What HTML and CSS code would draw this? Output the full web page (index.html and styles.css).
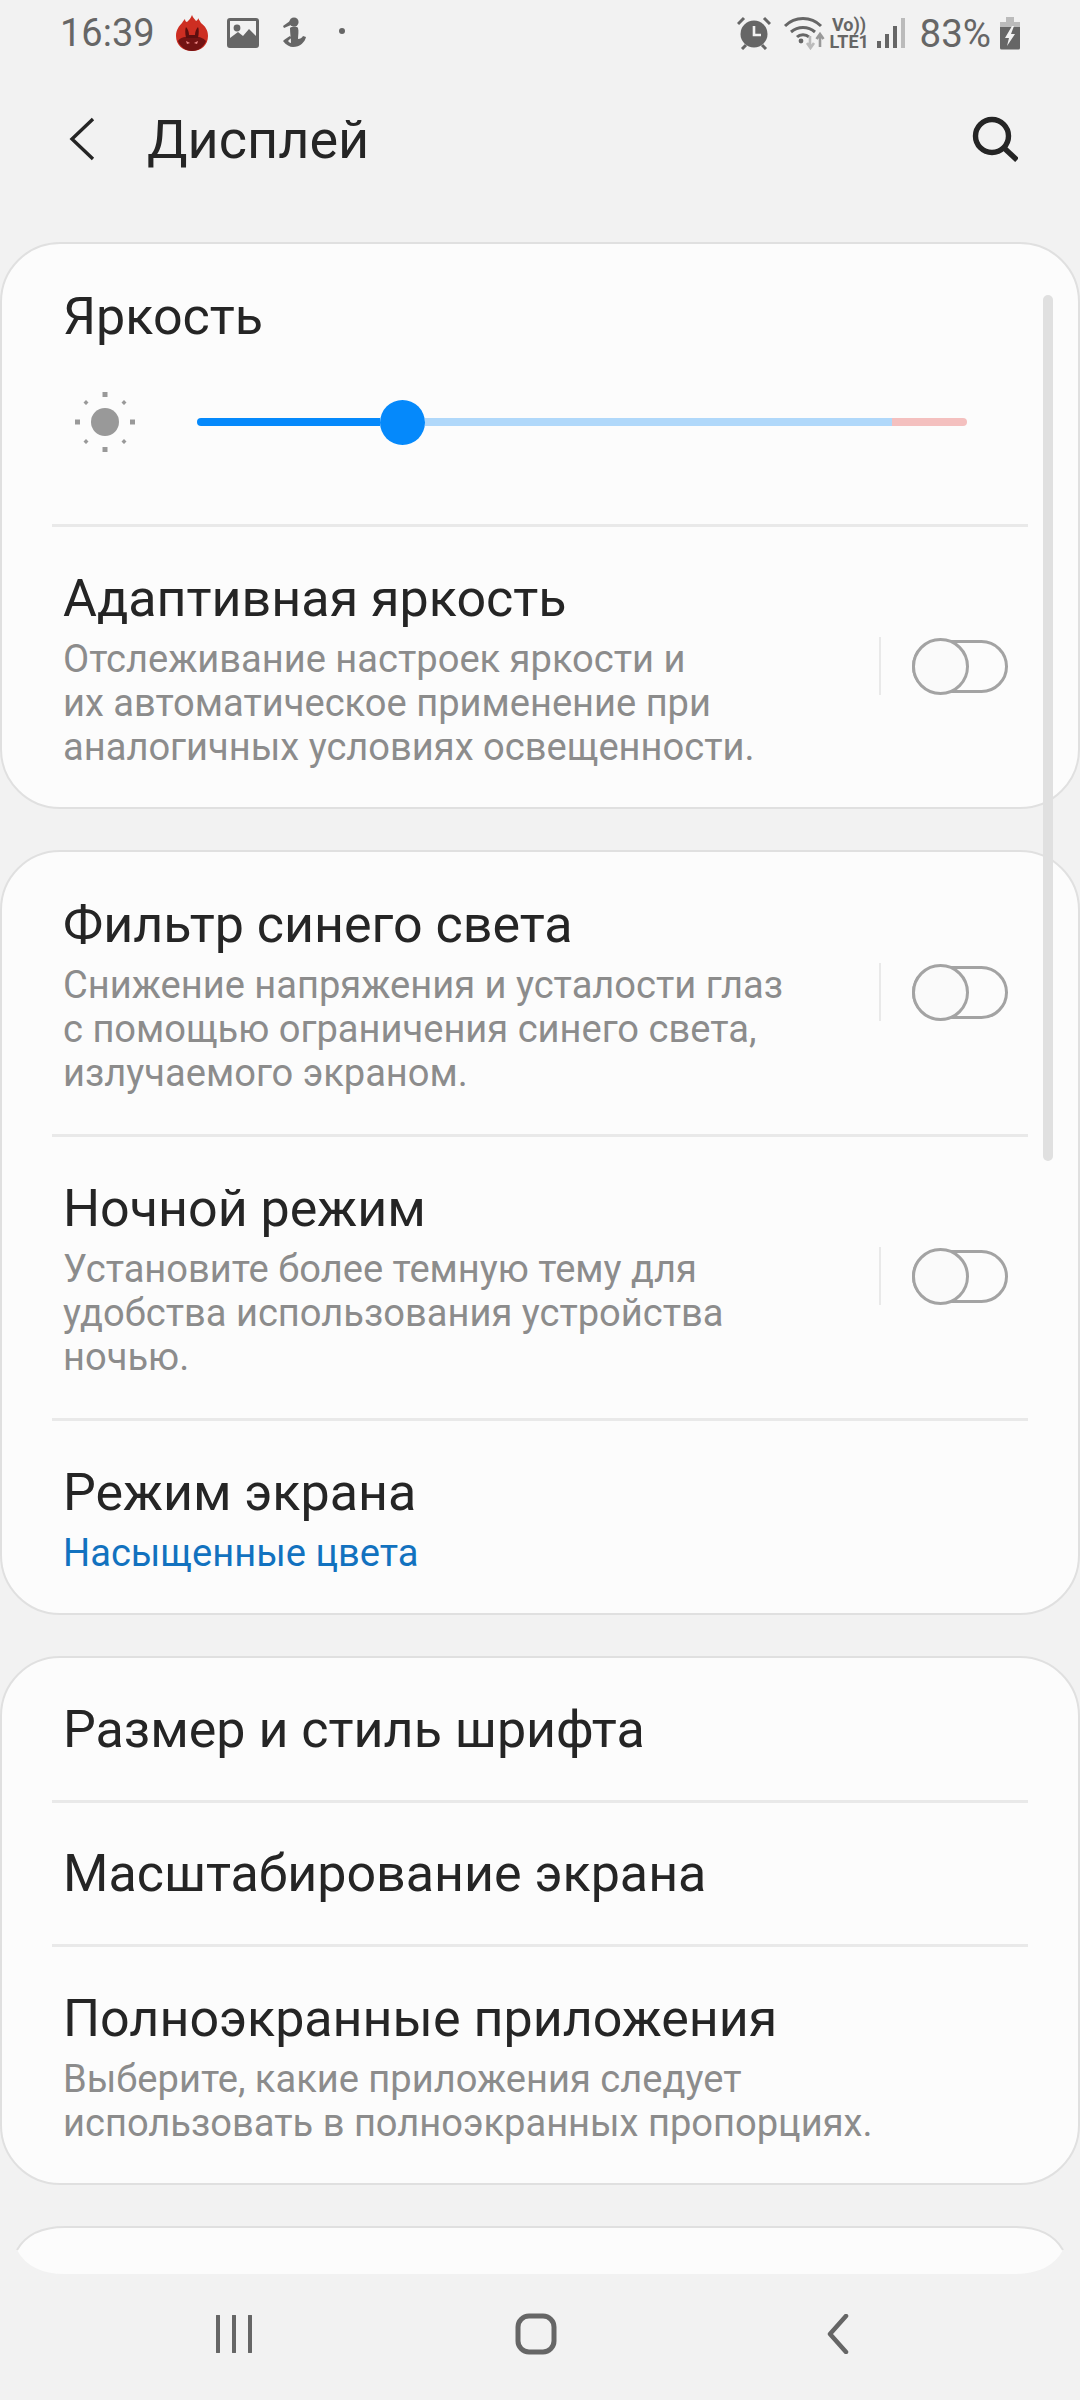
FILE: index.html
```html
<!DOCTYPE html>
<html lang="ru">
<head>
    <meta charset="UTF-8">
    <meta name="viewport" content="width=device-width, initial-scale=1.0">
    <title>Дисплей</title>
    <link rel="stylesheet" href="styles.css">
</head>
<body>
<div class="screen">

    <!-- Строка состояния -->
    <div class="status-bar">
        <div class="status-left">
            <span class="clock">16:39</span>
            <svg class="ic-antutu" viewBox="0 0 34 38"><path d="M17 1c1 3 3 4 4 6 2-1 2-2 2-3 1 2 2 3 3 5 4 3 7 7 7 13 0 9-7 15-16 15S1 31 1 22c0-6 3-10 6-13 1-2 2-3 3-4 0 2 1 3 2 3 2-2 4-4 5-7z" fill="#cd2e22"/><path d="M3 27c2 6 8 10 14 10s12-4 14-10c-3-3-6-4-7-4h-14c-2 0-5 1-7 4z" fill="#731313"/><path d="M11 24c-1-5-1-9 0-11 2 2 3 5 3 8h6c0-3 1-6 3-8 1 2 1 6 0 11z" fill="#5c0f0f"/><path d="M11 27l4 2-3 1zM23 27l-4 2 3 1z" fill="#e88"/></svg>
            <svg class="ic-pic" viewBox="0 0 32 30"><path d="M3 0h26a3 3 0 0 1 3 3v24a3 3 0 0 1-3 3H3a3 3 0 0 1-3-3V3a3 3 0 0 1 3-3zm0 3v17l8-6 5 4 6-7 7 7V3z" fill="#666" fill-rule="evenodd"/><circle cx="10" cy="10" r="3.4" fill="#666"/></svg>
            <svg class="ic-fig" viewBox="0 0 28 32"><circle cx="15" cy="5" r="4.6" fill="#666"/><path d="M11 4L4 9l1 2 7-3z" fill="#666"/><path d="M11 11c2-2 7-2 8 0 1 3 0 8 0 11 2 0 4-1 5-3l3 1c-1 5-6 10-13 10-3 0-7-2-10-6 2-2 5-4 7-5l1 2-3 3c1 1 2 2 3 2 0-4-1-10-1-15z" fill="#666"/></svg>
            <span class="dot"></span>
        </div>
        <div class="status-right">
            <svg class="ic-alarm" viewBox="0 0 34 34"><circle cx="17" cy="18" r="13.5" fill="#666"/><path d="M17 10v9h7" fill="none" stroke="#f2f2f2" stroke-width="2.6"/><path d="M1 8l6-6M33 8l-6-6" stroke="#666" stroke-width="3"/><path d="M5 33l4-4M29 33l-4-4" stroke="#666" stroke-width="3"/></svg>
            <svg class="ic-wifi" viewBox="0 0 42 34"><path d="M2 10c10-10 26-10 36 0M8 16c7-6 17-6 24 0M14 21c3-3 9-3 12 0" fill="none" stroke="#666" stroke-width="3"/><circle cx="18" cy="25" r="2.4" fill="#666"/><path d="M27 20v11M24 27l3.500 5 3.500-5" fill="none" stroke="#bbb" stroke-width="2.600"/><path d="M37 31V18M33.500 23l3.500-5 3.500 5" fill="none" stroke="#999" stroke-width="2.600"/></svg>
            <div class="volte">
                <span class="volte-top">Vo))</span>
                <span class="volte-bottom">LTE1</span>
            </div>
            <div class="signal">
                <i class="bar bar1"></i><i class="bar bar2"></i><i class="bar bar3"></i><i class="bar bar4"></i>
            </div>
            <span class="percent">83%</span>
            <svg class="ic-batt" viewBox="0 0 22 33"><path d="M7 0h8v5H7z" fill="#bbb"/><path d="M1 5h20v7H1z" fill="#bbb"/><path d="M1 10h20v21a1.500 1.500 0 0 1-1.500 1.500h-17A1.500 1.500 0 0 1 1 31z" fill="#666"/><path d="M13 9l-7 12h4l-2 8 8-12h-4l3-8z" fill="#f2f2f2"/></svg>
        </div>
    </div>

    <!-- Заголовок -->
    <div class="app-bar">
        <svg class="ic-back" viewBox="0 0 26 44"><path d="M24 2L3 22l21 20" fill="none" stroke="#252525" stroke-width="3.400"/></svg>
        <h1 class="app-title">Дисплей</h1>
        <svg class="ic-search" viewBox="0 0 46 46"><circle cx="20" cy="20" r="16.500" fill="none" stroke="#252525" stroke-width="5.400"/><path d="M31 31l14 13" stroke="#252525" stroke-width="5.400"/></svg>
    </div>

    <div class="cards">
        <div class="scrollbar"></div>

        <section class="card">
            <div class="row row-brightness">
                <div class="row-title">Яркость</div>
                <div class="slider-line">
                    <svg class="ic-sun" viewBox="0 0 60 60"><circle cx="30" cy="30" r="14" fill="#999"/><g fill="#999"><rect x="27.500" y="0" width="5" height="5"/><rect x="27.500" y="55" width="5" height="5"/><rect x="0" y="27.500" width="5" height="5"/><rect x="55" y="27.500" width="5" height="5"/><path d="M11 8l2.500 2.500L11 13 8.500 10.500zM49 8l2.500 2.500L49 13l-2.500-2.500zM11 47l2.500 2.500L11 52l-2.500-2.500zM49 47l2.500 2.500L49 52l-2.500-2.500z"/></g></svg>
                    <div class="slider">
                        <div class="track-done"></div>
                        <div class="thumb"></div>
                        <div class="track-rest"></div>
                        <div class="track-high"></div>
                    </div>
                </div>
            </div>
            <div class="row row-switch">
                <div class="row-text">
                    <div class="row-title">Адаптивная яркость</div>
                    <div class="row-sub">Отслеживание настроек яркости и<br>их автоматическое применение при<br>аналогичных условиях освещенности.</div>
                </div>
                <div class="switch-wrap"><div class="switch"><div class="knob"></div></div></div>
            </div>
        </section>

        <section class="card">
            <div class="row row-switch">
                <div class="row-text">
                    <div class="row-title">Фильтр синего света</div>
                    <div class="row-sub">Снижение напряжения и усталости глаз<br>с помощью ограничения синего света,<br>излучаемого экраном.</div>
                </div>
                <div class="switch-wrap"><div class="switch"><div class="knob"></div></div></div>
            </div>
            <div class="row row-switch">
                <div class="row-text">
                    <div class="row-title">Ночной режим</div>
                    <div class="row-sub">Установите более темную тему для<br>удобства использования устройства<br>ночью.</div>
                </div>
                <div class="switch-wrap"><div class="switch"><div class="knob"></div></div></div>
            </div>
            <div class="row">
                <div class="row-title">Режим экрана</div>
                <div class="row-value">Насыщенные цвета</div>
            </div>
        </section>

        <section class="card">
            <div class="row row-plain">
                <div class="row-title">Размер и стиль шрифта</div>
            </div>
            <div class="row row-plain">
                <div class="row-title">Масштабирование экрана</div>
            </div>
            <div class="row">
                <div class="row-title">Полноэкранные приложения</div>
                <div class="row-sub">Выберите, какие приложения следует<br>использовать в полноэкранных пропорциях.</div>
            </div>
        </section>

        <!-- Край следующей карточки под кнопками -->
        <svg class="card-cut" viewBox="0 0 1080 48"><path d="M65 1H1015Q1050 1 1063 24Q1050 48 1015 48H65Q30 48 17 24Q30 1 65 1z" fill="#fcfcfc"/><path d="M17 24Q30 1 65 1H1015Q1050 1 1063 24" fill="none" stroke="#e0e0e0" stroke-width="2"/></svg>
    </div>

    <!-- Кнопки навигации -->
    <div class="nav-bar">
        <svg class="ic-recent" viewBox="0 0 38 38"><path d="M3 1v36M19 1v36M35 1v36" stroke="#666" stroke-width="4" stroke-linecap="round"/></svg>
        <svg class="ic-home" viewBox="0 0 42 42"><rect x="3" y="3" width="36" height="36" rx="11" fill="none" stroke="#666" stroke-width="5"/></svg>
        <svg class="ic-navback" viewBox="0 0 24 40"><path d="M20 2L4 20l16 18" fill="none" stroke="#666" stroke-width="4.500" stroke-linecap="round" stroke-linejoin="round"/></svg>
    </div>

</div>
</body>
</html>
```

FILE: styles.css
```css
html, body {
    margin: 0;
    padding: 0;
}

body {
    font-family: Roboto, "Noto Sans", sans-serif;
    background-color: #f2f2f2;
    color: #252525;
}

.screen {
    width: 1080px;
    height: 2400px;
    overflow: hidden;
    display: flex;
    flex-direction: column;
}

/* Строка состояния */
.status-bar {
    height: 66px;
    padding: 0 59px 0 60px;
    display: flex;
    justify-content: space-between;
    align-items: center;
    color: #666;
}

.status-left,
.status-right {
    display: flex;
    align-items: center;
}

.clock {
    font-size: 38px;
    margin-right: 20px;
}

.ic-antutu { width: 34px; height: 38px; margin-right: 18px; }
.ic-pic { width: 32px; height: 30px; margin-right: 20px; }
.ic-fig { width: 28px; height: 32px; margin-right: 32px; }

.dot {
    width: 6px;
    height: 6px;
    border-radius: 50%;
    background-color: #666;
    margin-bottom: 4px;
}

.ic-alarm { width: 34px; height: 34px; margin-right: 12px; }
.ic-wifi { width: 42px; height: 34px; margin-right: 5px; }

.volte {
    display: flex;
    flex-direction: column;
    font-weight: 700;
    width: 39px;
    text-align: center;
    margin-right: 8px;
}

.volte-top { font-size: 18px; line-height: 17px; }
.volte-bottom { font-size: 18px; line-height: 18px; white-space: nowrap; }

.signal {
    display: flex;
    align-items: flex-end;
    gap: 4px;
    height: 30px;
    margin-right: 15px;
}

.bar { width: 4px; background-color: #666; display: block; }
.bar1 { height: 7px; }
.bar2 { height: 14px; }
.bar3 { height: 22px; }
.bar4 { height: 30px; background-color: #bbb; }

.percent {
    font-size: 38.5px;
    margin-right: 8px;
}

.ic-batt { width: 22px; height: 33px; }

/* Заголовок */
.app-bar {
    height: 176px;
    padding: 0 62px 30px 69px;
    box-sizing: border-box;
    display: flex;
    align-items: center;
}

.ic-back { width: 26px; height: 44px; margin-right: 52px; }

.app-title {
    font-size: 54px;
    font-weight: 400;
    margin: 0;
    flex: 1;
}

.ic-search { width: 46px; height: 46px; }

/* Карточки */
.cards {
    display: flex;
    flex-direction: column;
    gap: 41px;
    position: relative;
    flex: 1;
}

.card {
    background-color: #fcfcfc;
    border: 2px solid #e0e0e0;
    border-radius: 60px;
    box-sizing: border-box;
    padding: 1px 50px 0;
}

.scrollbar {
    position: absolute;
    top: 53px;
    right: 27px;
    width: 10px;
    height: 866px;
    border-radius: 5px;
    background-color: #e0e0e0;
}

.row {
    padding: 42px 12px 39px 11px;
    border-bottom: 3px solid #e9e9e9;
}

.row:last-child {
    border-bottom: none;
    padding-bottom: 38px;
}

.row-title {
    font-size: 52px;
    line-height: 60px;
}

.row-sub {
    font-size: 38.1px;
    line-height: 44px;
    color: #8c8c8c;
    margin-top: 8px;
}

.row-value {
    font-size: 38.1px;
    line-height: 44px;
    color: #1272bf;
    margin-top: 8px;
}

.row-plain {
    padding: 0 12px 0 11px;
    height: 144px;
    display: flex;
    align-items: center;
    box-sizing: border-box;
}

.row-switch {
    display: flex;
    align-items: center;
    justify-content: space-between;
}

/* Яркость */
.row-brightness {
    height: 282px;
    box-sizing: border-box;
}

.slider-line {
    display: flex;
    align-items: center;
    margin-top: 45px;
}

.ic-sun { width: 60px; height: 60px; margin: 0 62px 0 12px; }

.slider {
    display: flex;
    align-items: center;
    width: 770px;
}

.track-done {
    width: 183px;
    height: 8px;
    border-radius: 4px 0 0 4px;
    background-color: #0589fb;
}

.thumb {
    width: 45px;
    height: 45px;
    border-radius: 50%;
    background-color: #0589fb;
}

.track-rest {
    width: 467px;
    height: 8px;
    background-color: #b0d8fa;
}

.track-high {
    width: 75px;
    height: 8px;
    border-radius: 0 4px 4px 0;
    background-color: #f4c0bf;
}

/* Переключатель */
.switch-wrap {
    border-left: 2px solid #e9e9e9;
    height: 58px;
    padding-left: 31px;
    display: flex;
    align-items: center;
    margin: 0 8px 6px 0;
}

.switch {
    width: 96px;
    height: 53px;
    border: 3px solid #a3a3a3;
    border-radius: 28px;
    box-sizing: border-box;
    display: flex;
    align-items: center;
}

.knob {
    width: 57px;
    height: 57px;
    border: 3px solid #a3a3a3;
    border-radius: 50%;
    background-color: #fafafa;
    box-sizing: border-box;
    margin-left: -3px;
    flex: none;
}

.card-cut {
    display: block;
    width: 1080px;
    height: 48px;
    flex: none;
}

/* Кнопки навигации */
.nav-bar {
    height: 126px;
    flex: none;
    display: flex;
    align-items: center;
    padding-bottom: 6px;
    box-sizing: border-box;
}

.ic-recent { width: 38px; height: 38px; margin-left: 215px; }
.ic-home { width: 42px; height: 42px; margin-left: 262px; }
.ic-navback { width: 24px; height: 40px; margin-left: 269px; }
```
